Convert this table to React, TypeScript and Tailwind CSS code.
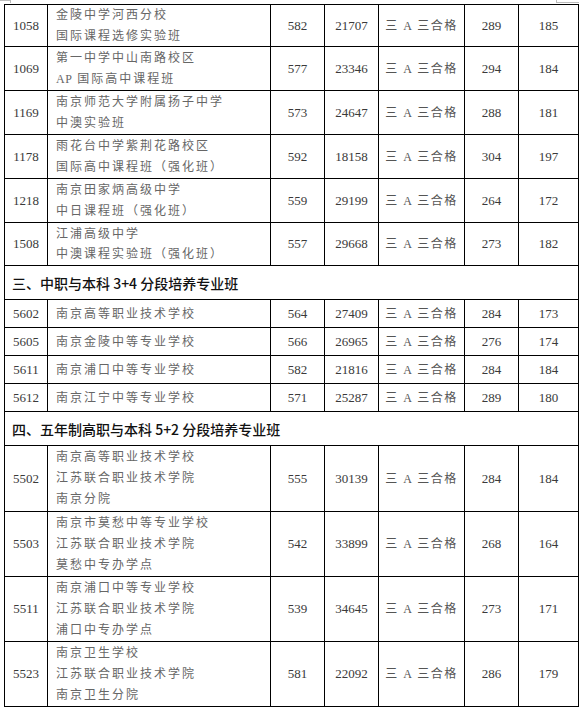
import React from "react";

type Row = { code: string; names: React.ReactNode[]; a: string; b: string; c: string; d: string; e: string };

const sec1: Row[] = [
  { code: "1058", names: ["金陵中学河西分校", "国际课程选修实验班"], a: "582", b: "21707", c: "三 A 三合格", d: "289", e: "185" },
  { code: "1069", names: ["第一中学中山南路校区", <><span className="tracking-[0.5px]">AP</span> 国际高中课程班</>], a: "577", b: "23346", c: "三 A 三合格", d: "294", e: "184" },
  { code: "1169", names: ["南京师范大学附属扬子中学", "中澳实验班"], a: "573", b: "24647", c: "三 A 三合格", d: "288", e: "181" },
  { code: "1178", names: ["雨花台中学紫荆花路校区", "国际高中课程班（强化班）"], a: "592", b: "18158", c: "三 A 三合格", d: "304", e: "197" },
  { code: "1218", names: ["南京田家炳高级中学", "中日课程班（强化班）"], a: "559", b: "29199", c: "三 A 三合格", d: "264", e: "172" },
  { code: "1508", names: ["江浦高级中学", "中澳课程实验班（强化班）"], a: "557", b: "29668", c: "三 A 三合格", d: "273", e: "182" },
];
const sec1H = ["h-[42px]", "h-[44px]", "h-[44px]", "h-[44px]", "h-[44px]", "h-[43px]"];

const sec3: Row[] = [
  { code: "5602", names: ["南京高等职业技术学校"], a: "564", b: "27409", c: "三 A 三合格", d: "284", e: "173" },
  { code: "5605", names: ["南京金陵中等专业学校"], a: "566", b: "26965", c: "三 A 三合格", d: "276", e: "174" },
  { code: "5611", names: ["南京浦口中等专业学校"], a: "582", b: "21816", c: "三 A 三合格", d: "284", e: "184" },
  { code: "5612", names: ["南京江宁中等专业学校"], a: "571", b: "25287", c: "三 A 三合格", d: "289", e: "180" },
];

const sec4: Row[] = [
  { code: "5502", names: ["南京高等职业技术学校", "江苏联合职业技术学院", "南京分院"], a: "555", b: "30139", c: "三 A 三合格", d: "284", e: "184" },
  { code: "5503", names: ["南京市莫愁中等专业学校", "江苏联合职业技术学院", "莫愁中专办学点"], a: "542", b: "33899", c: "三 A 三合格", d: "268", e: "164" },
  { code: "5511", names: ["南京浦口中等专业学校", "江苏联合职业技术学院", "浦口中专办学点"], a: "539", b: "34645", c: "三 A 三合格", d: "273", e: "171" },
  { code: "5523", names: ["南京卫生学校", "江苏联合职业技术学院", "南京卫生分院"], a: "581", b: "22092", c: "三 A 三合格", d: "286", e: "179" },
];
const sec4H = ["h-[66px]", "h-[65px]", "h-[65px]", "h-[65px]"];

const num = "border border-black text-center align-middle text-[13px] leading-[16px] text-[#3a3a3a] [font-family:'Liberation_Serif',serif]";
const cjk = "[font-family:'Liberation_Serif','Noto_Sans_CJK_SC',serif]";

function DataRow({ r, h, lead }: { r: Row; h: string; lead: string }) {
  return (
    <tr className={h}>
      <td className={num}>{r.code}</td>
      <td className={`border border-black pl-[8px] align-middle text-[12px] tracking-[2px] text-[#666] ${lead} ${cjk}`}>
        {r.names.map((n, i) => (
          <div key={i}>{n}</div>
        ))}
      </td>
      <td className={num}>{r.a}</td>
      <td className={num}>{r.b}</td>
      <td className={`border border-black text-center align-middle text-[12px] leading-[16px] tracking-[1.5px] text-[#555] ${cjk}`}>{r.c}</td>
      <td className={num}>{r.d}</td>
      <td className={num}>{r.e}</td>
    </tr>
  );
}

function Header({ text }: { text: string }) {
  return (
    <tr className="h-[34px]">
      <td colSpan={7} className="border border-black pl-[7px] align-middle text-[14px] leading-[20px] font-medium text-[#111] [font-family:'Noto_Sans_CJK_SC',sans-serif]">
        {text}
      </td>
    </tr>
  );
}

export default function App() {
  return (
    <div className="relative w-[579px] h-[710px] bg-white overflow-hidden">
      <div className="absolute left-0 top-0 w-[10px] h-[1px] bg-[#bbb]" />
      <div className="absolute left-[10px] top-0 w-[1px] h-[3px] bg-[#bbb]" />
      <div className="absolute left-[556px] top-0 w-[1px] h-[3px] bg-[#bbb]" />
      <div className="absolute left-[556px] top-[2px] w-[23px] h-[1px] bg-[#bbb]" />
      <div className="pt-[4px] pl-[4px]">
        <table className="table-fixed border-collapse w-[574px]">
          <colgroup>
            <col className="w-[43px]" />
            <col className="w-[223px]" />
            <col className="w-[54px]" />
            <col className="w-[54px]" />
            <col className="w-[86px]" />
            <col className="w-[54px]" />
            <col className="w-[60px]" />
          </colgroup>
          <tbody>
            {sec1.map((r, i) => (
              <DataRow key={r.code} r={r} h={sec1H[i]} lead="leading-[20.5px]" />
            ))}
            <Header text="三、中职与本科 3+4 分段培养专业班" />
            {sec3.map((r) => (
              <DataRow key={r.code} r={r} h="h-[28px]" lead="leading-[20px]" />
            ))}
            <Header text="四、五年制高职与本科 5+2 分段培养专业班" />
            {sec4.map((r, i) => (
              <DataRow key={r.code} r={r} h={sec4H[i]} lead="leading-[21px]" />
            ))}
          </tbody>
        </table>
      </div>
    </div>
  );
}
